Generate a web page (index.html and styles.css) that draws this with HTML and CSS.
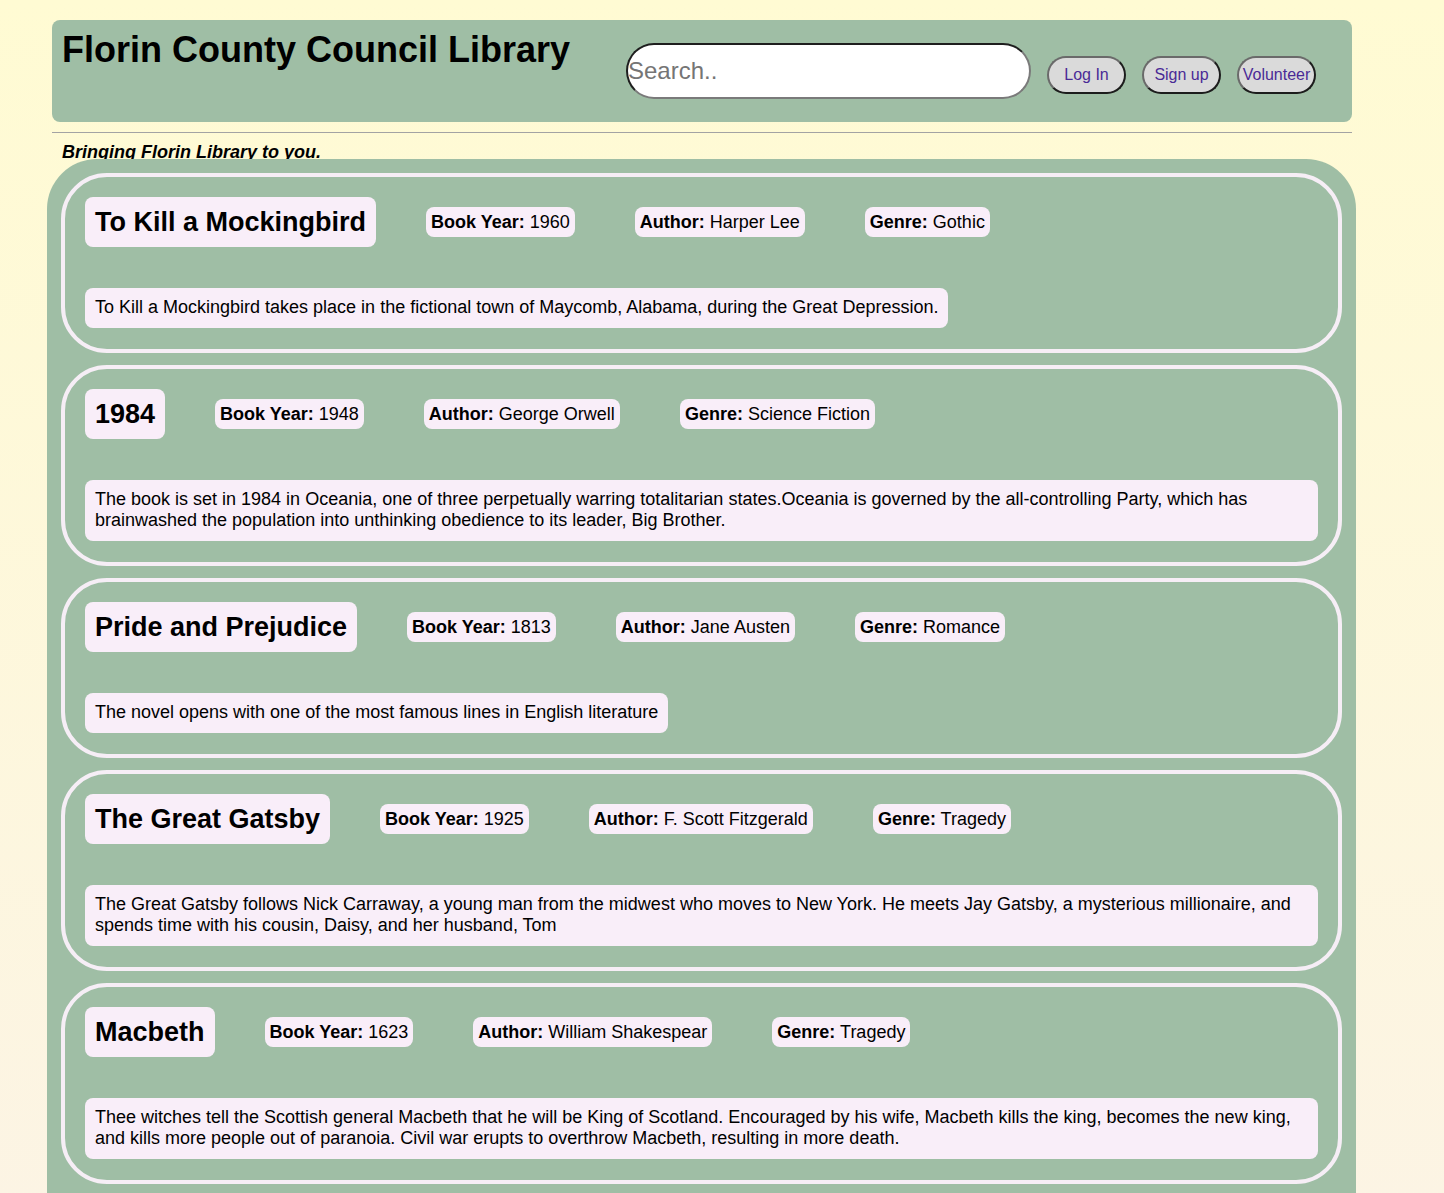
FILE: index.html
```html
<!DOCTYPE html>
<html lang="en">
<head>
<meta charset="utf-8">
<title>Florin County Council Library</title>
<link rel="stylesheet" href="styles.css">
</head>
<body>
<div class="page">
  <header class="topbar">
    <h1 class="site-title">Florin County Council Library</h1>
    <input class="search" type="text" placeholder="Search..">
    <div class="actions">
      <button class="btn">Log In</button>
      <button class="btn">Sign up</button>
      <button class="btn">Volunteer</button>
    </div>
  </header>
  <hr class="rule">
  <p class="tagline">Bringing Florin Library to you.</p>
  <main class="books">
    <section class="book">
      <div class="book-head">
        <h2 class="book-title">To Kill a Mockingbird</h2>
        <span class="meta"><b>Book Year:</b> 1960</span>
        <span class="meta"><b>Author:</b> Harper Lee</span>
        <span class="meta"><b>Genre:</b> Gothic</span>
      </div>
      <p class="desc">To Kill a Mockingbird takes place in the fictional town of Maycomb, Alabama, during the Great Depression.</p>
    </section>
    <section class="book">
      <div class="book-head">
        <h2 class="book-title">1984</h2>
        <span class="meta"><b>Book Year:</b> 1948</span>
        <span class="meta"><b>Author:</b> George Orwell</span>
        <span class="meta"><b>Genre:</b> Science Fiction</span>
      </div>
      <p class="desc">The book is set in 1984 in Oceania, one of three perpetually warring totalitarian states.Oceania is governed by the all-controlling Party, which has brainwashed the population into unthinking obedience to its leader, Big Brother.</p>
    </section>
    <section class="book">
      <div class="book-head">
        <h2 class="book-title">Pride and Prejudice</h2>
        <span class="meta"><b>Book Year:</b> 1813</span>
        <span class="meta"><b>Author:</b> Jane Austen</span>
        <span class="meta"><b>Genre:</b> Romance</span>
      </div>
      <p class="desc">The novel opens with one of the most famous lines in English literature</p>
    </section>
    <section class="book">
      <div class="book-head">
        <h2 class="book-title">The Great Gatsby</h2>
        <span class="meta"><b>Book Year:</b> 1925</span>
        <span class="meta"><b>Author:</b> F. Scott Fitzgerald</span>
        <span class="meta"><b>Genre:</b> Tragedy</span>
      </div>
      <p class="desc">The Great Gatsby follows Nick Carraway, a young man from the midwest who moves to New York. He meets Jay Gatsby, a mysterious millionaire, and spends time with his cousin, Daisy, and her husband, Tom</p>
    </section>
    <section class="book">
      <div class="book-head">
        <h2 class="book-title">Macbeth</h2>
        <span class="meta"><b>Book Year:</b> 1623</span>
        <span class="meta"><b>Author:</b> William Shakespear</span>
        <span class="meta"><b>Genre:</b> Tragedy</span>
      </div>
      <p class="desc">Thee witches tell the Scottish general Macbeth that he will be King of Scotland. Encouraged by his wife, Macbeth kills the king, becomes the new king, and kills more people out of paranoia. Civil war erupts to overthrow Macbeth, resulting in more death.</p>
    </section>
  </main>
</div>
</body>
</html>
```

FILE: styles.css
```css
html, body {
  margin: 0;
  padding: 0;
}

body {
  min-height: 100vh;
  background: linear-gradient(#fffbd3, #fcf4e4);
  font-family: "Liberation Sans", Arial, sans-serif;
  font-size: 18px;
  color: #000;
}

.page {
  padding: 20px 0 0 52px;
  width: 1300px;
}

.topbar {
  display: flex;
  align-items: flex-start;
  height: 102px;
  background: #9fbea5;
  border-radius: 8px;
  padding-left: 10px;
  box-sizing: border-box;
}

.site-title {
  margin: 9px 0 0;
  font-size: 36px;
  font-weight: bold;
  line-height: 41px;
  white-space: nowrap;
}

.search {
  margin: 23px 0 0 56px;
  width: 405px;
  height: 56px;
  box-sizing: border-box;
  padding: 0;
  border: 2px solid #767676;
  border-top-color: #1e1e1e;
  border-left-color: #1e1e1e;
  border-bottom-color: #7a7a7a;
  border-right-color: #7a7a7a;
  border-radius: 28px;
  background: #fff;
  font-family: "Liberation Sans", Arial, sans-serif;
  font-size: 24px;
  outline: none;
}

.search::placeholder {
  color: #757575;
}

.actions {
  display: flex;
  gap: 16px;
  margin: 36px 0 0 16px;
}

.btn {
  width: 79px;
  height: 38px;
  box-sizing: border-box;
  padding: 0;
  background: #dadada;
  border: 2px solid #1c1c1c;
  border-top-color: #6a6a6a;
  border-left-color: #6a6a6a;
  border-radius: 19px;
  color: #4a2a96;
  font-family: "Liberation Sans", Arial, sans-serif;
  font-size: 16px;
  white-space: nowrap;
}

.rule {
  margin: 10px 0 0;
  border: 0;
  border-top: 1px solid #a3a3a3;
  height: 0;
}

.tagline {
  margin: 9px 0 0 10px;
  height: 17px;
  font-size: 18px;
  line-height: 21px;
  font-weight: bold;
  font-style: italic;
}

.books {
  position: relative;
  margin: 0 0 0 -5px;
  width: 1309px;
  box-sizing: border-box;
  padding: 14px 14px 20px;
  background: #9fbea5;
  border-radius: 50px 50px 0 0;
  display: flex;
  flex-direction: column;
  gap: 12px;
}

.book {
  border: 4px solid #f6eef6;
  border-radius: 46px;
  padding: 20px 20px 21px;
}

.book-head {
  display: flex;
  align-items: center;
}

.book-title {
  margin: 0 50px 0 0;
  padding: 0 10px;
  height: 50px;
  line-height: 50px;
  font-size: 27px;
  font-weight: bold;
  background: #f9eef9;
  border-radius: 8px;
  white-space: nowrap;
}

.meta {
  margin-right: 60px;
  padding: 0 5px;
  height: 30px;
  line-height: 30px;
  font-size: 18px;
  background: #f9eef9;
  border-radius: 8px;
  white-space: nowrap;
}

.desc {
  display: table;
  margin: 41px 0 0;
  padding: 9px 10px 10px;
  font-size: 18px;
  line-height: 21px;
  background: #f9eef9;
  border-radius: 8px;
}
```
